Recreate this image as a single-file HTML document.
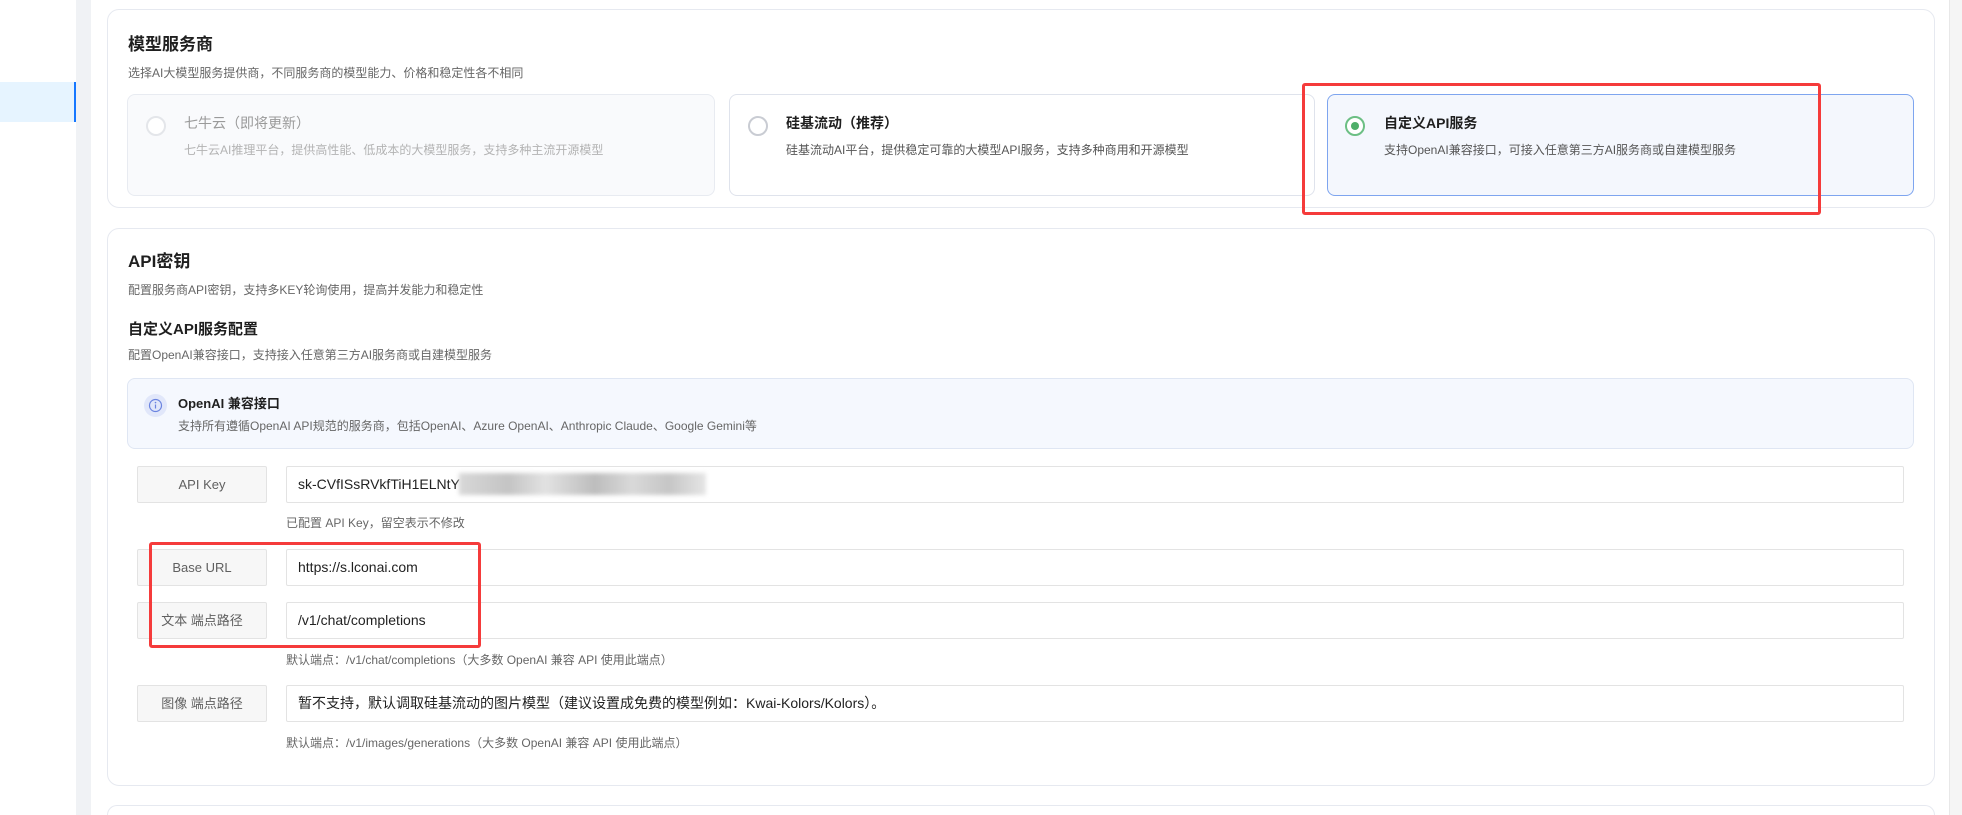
<!DOCTYPE html>
<html style="width:1962px;height:815px;overflow:hidden"><head><meta charset="utf-8"><style>
*{box-sizing:border-box;margin:0;padding:0}
body{width:1962px;height:815px;overflow:hidden;background:#fff;font-family:"Liberation Sans","Noto Sans CJK SC",sans-serif;position:relative;color:#1f1f1f}
.abs{position:absolute}
.card{position:absolute;left:107px;width:1828px;border:1px solid #e6e9f0;border-radius:12px;background:#fff}
.t{position:absolute;white-space:nowrap}
.opt{position:absolute;top:94px;height:102px;border:1px solid #dfe3ec;border-radius:8px;background:#fff}
.radio{position:absolute;left:18px;top:21px;width:20px;height:20px;border-radius:50%;border:2px solid #c9ccd3;background:#fff}
.lbl{position:absolute;left:137px;width:130px;height:37px;border:1px solid #e3e3e3;background:#f7f7f7;border-radius:2px;font-size:13px;color:#606060;text-align:center;line-height:35px}
.inp{position:absolute;left:286px;width:1618px;height:37px;border:1px solid #e3e3e3;background:#fff;border-radius:2px;font-size:14px;color:#222;padding-left:11px;line-height:35px;white-space:nowrap}
.hint{position:absolute;left:286px;font-size:12px;color:#666;white-space:nowrap}
.red{position:absolute;border:3px solid #f53b3b;border-radius:3px}
</style></head><body>
<div class="abs" style="left:0;top:0;width:76px;height:815px;background:#fff"></div>
<div class="abs" style="left:0;top:82px;width:76px;height:40px;background:#e6f4ff"></div>
<div class="abs" style="left:74px;top:82px;width:2px;height:40px;background:#1677ff"></div>
<div class="abs" style="left:76px;top:0;width:15px;height:815px;background:#f0f2f5"></div>
<div class="abs" style="left:1949px;top:0;width:13px;height:815px;background:#f5f5f5;border-left:1px solid #e8e8e8"></div>

<div class="card" style="top:9px;height:199px">
  <div class="t" style="left:20px;top:20px;font-size:17px;font-weight:bold">模型服务商</div>
  <div class="t" style="left:20px;top:54px;font-size:12px;color:#666">选择AI大模型服务提供商，不同服务商的模型能力、价格和稳定性各不相同</div>
</div>
<div class="opt" style="left:127px;width:588px;background:#f9fafc;border-color:#e8ebf1">
  <div class="radio" style="border-color:#e4e6ea"></div>
  <div class="t" style="left:56px;top:18px;font-size:14px;color:#9a9a9a">七牛云（即将更新）</div>
  <div class="t" style="left:56px;top:46px;font-size:12px;color:#b3b3b3">七牛云AI推理平台，提供高性能、低成本的大模型服务，支持多种主流开源模型</div>
</div>
<div class="opt" style="left:729px;width:586px">
  <div class="radio"></div>
  <div class="t" style="left:56px;top:18px;font-size:14px;font-weight:bold">硅基流动（推荐）</div>
  <div class="t" style="left:56px;top:46px;font-size:12px;color:#555">硅基流动AI平台，提供稳定可靠的大模型API服务，支持多种商用和开源模型</div>
</div>
<div class="opt" style="left:1327px;width:587px;border-color:#7ea5ef;background:#f4f7fd">
  <div class="radio" style="border-color:#6cbf84;left:17px"><div style="position:absolute;left:4px;top:4px;width:8px;height:8px;border-radius:50%;background:#4fae69"></div></div>
  <div class="t" style="left:56px;top:18px;font-size:14px;font-weight:bold">自定义API服务</div>
  <div class="t" style="left:56px;top:46px;font-size:12px;color:#555">支持OpenAI兼容接口，可接入任意第三方AI服务商或自建模型服务</div>
</div>
<div class="red" style="left:1302px;top:83px;width:519px;height:132px"></div>

<div class="card" style="top:228px;height:558px">
  <div class="t" style="left:20px;top:18px;font-size:17px;font-weight:bold">API密钥</div>
  <div class="t" style="left:20px;top:52px;font-size:12px;color:#666">配置服务商API密钥，支持多KEY轮询使用，提高并发能力和稳定性</div>
  <div class="t" style="left:20px;top:89px;font-size:15px;font-weight:bold">自定义API服务配置</div>
  <div class="t" style="left:20px;top:117px;font-size:12px;color:#666">配置OpenAI兼容接口，支持接入任意第三方AI服务商或自建模型服务</div>
</div>
<div class="abs" style="left:127px;top:378px;width:1787px;height:71px;background:#f5f8fe;border:1px solid #dfe6f3;border-radius:8px">
  <div class="abs" style="left:16px;top:15px;width:23px;height:23px;border-radius:50%;background:#e1e7fa">
    <svg width="23" height="23" viewBox="0 0 23 23" style="position:absolute;left:0;top:0"><circle cx="11.5" cy="11.5" r="6" fill="none" stroke="#6b84e0" stroke-width="1.2"/><line x1="11.5" y1="10.5" x2="11.5" y2="14.5" stroke="#6b84e0" stroke-width="1.2"/><circle cx="11.5" cy="8.6" r="0.8" fill="#6b84e0"/></svg>
  </div>
  <div class="t" style="left:50px;top:14px;font-size:13px;font-weight:bold">OpenAI 兼容接口</div>
  <div class="t" style="left:50px;top:38px;font-size:12px;color:#666">支持所有遵循OpenAI API规范的服务商，包括OpenAI、Azure OpenAI、Anthropic Claude、Google Gemini等</div>
</div>

<div class="lbl" style="top:466px">API Key</div>
<div class="inp" style="top:466px">sk-CVfISsRVkfTiH1ELNtY</div>
<div class="abs" style="left:459px;top:473px;width:247px;height:22px;background:linear-gradient(90deg,#d8d8d8,#c4c4c4 20%,#e2e2e2 35%,#bdbdbd 55%,#d9d9d9 70%,#c6c6c6 85%,#e6e6e6);filter:blur(2px)"></div>
<div class="hint" style="top:514px">已配置 API Key，留空表示不修改</div>

<div class="lbl" style="top:549px">Base URL</div>
<div class="inp" style="top:549px">https://s.lconai.com</div>
<div class="lbl" style="top:602px">文本 端点路径</div>
<div class="inp" style="top:602px">/v1/chat/completions</div>
<div class="hint" style="top:651px">默认端点：/v1/chat/completions（大多数 OpenAI 兼容 API 使用此端点）</div>
<div class="lbl" style="top:685px">图像 端点路径</div>
<div class="inp" style="top:685px">暂不支持，默认调取硅基流动的图片模型（建议设置成免费的模型例如：Kwai-Kolors/Kolors）。</div>
<div class="hint" style="top:734px">默认端点：/v1/images/generations（大多数 OpenAI 兼容 API 使用此端点）</div>
<div class="red" style="left:149px;top:542px;width:332px;height:106px"></div>

<div class="abs" style="left:107px;top:805px;width:1828px;height:10px;border:1px solid #e6e9f0;border-bottom:none;border-radius:12px 12px 0 0;background:#fff"></div>
</body></html>
